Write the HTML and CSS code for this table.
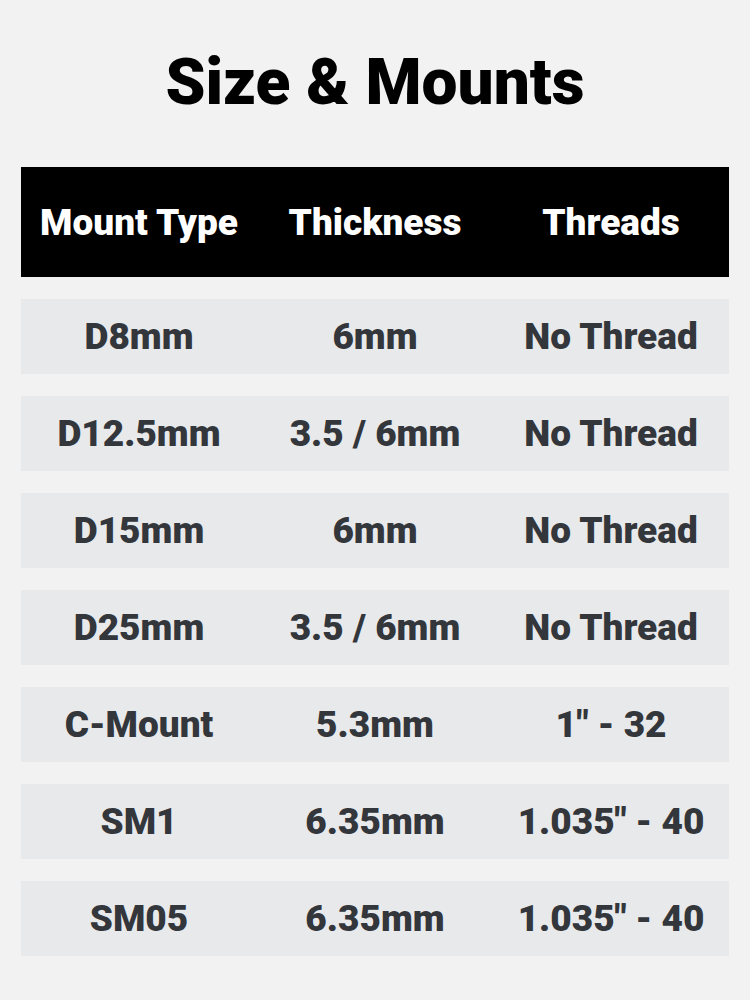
FILE: index.html
```html
<!DOCTYPE html>
<html>
<head>
<meta charset="utf-8">
<link rel="stylesheet" href="styles.css">
</head>
<body>
<main class="page">
  <h1 class="title">Size &amp; Mounts</h1>
  <div class="table">
    <div class="row head"><div>Mount Type</div><div>Thickness</div><div>Threads</div></div>
    <div class="row"><div>D8mm</div><div>6mm</div><div>No Thread</div></div>
    <div class="row"><div>D12.5mm</div><div>3.5 / 6mm</div><div>No Thread</div></div>
    <div class="row"><div>D15mm</div><div>6mm</div><div>No Thread</div></div>
    <div class="row"><div>D25mm</div><div>3.5 / 6mm</div><div>No Thread</div></div>
    <div class="row"><div>C-Mount</div><div>5.3mm</div><div>1" - 32</div></div>
    <div class="row"><div>SM1</div><div>6.35mm</div><div>1.035" - 40</div></div>
    <div class="row"><div>SM05</div><div>6.35mm</div><div>1.035" - 40</div></div>
  </div>
</main>
</body>
</html>
```
FILE: styles.css
```css
html, body {
  margin: 0;
  padding: 0;
  background: #f2f2f2;
}
.page {
  width: 750px;
  height: 1000px;
  box-sizing: border-box;
  padding: 0 21px;
  font-family: Roboto, "Liberation Sans", sans-serif;
  font-weight: 900;
}
.title {
  margin: 0;
  height: 167px;
  display: flex;
  align-items: center;
  justify-content: center;
  font-size: 64px;
  font-weight: 900;
  color: #000;
  padding-bottom: 2px;
  box-sizing: border-box;
}
.table {
  display: flex;
  flex-direction: column;
  gap: 22px;
}
.row {
  display: grid;
  grid-template-columns: 1fr 1fr 1fr;
  height: 75px;
  align-items: center;
  background: #e8e9eb;
  color: #33363b;
  font-size: 37px;
  text-align: center;
}
.row.head {
  height: 110px;
  background: #000;
  color: #fff;
}
```
